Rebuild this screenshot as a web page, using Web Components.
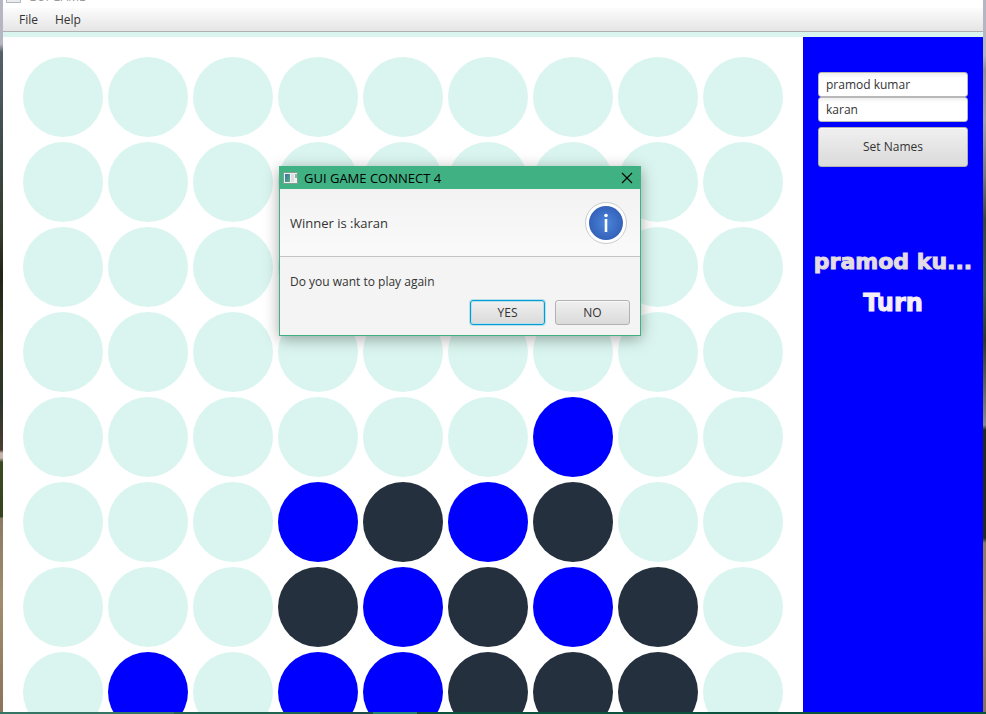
<!DOCTYPE html>
<html lang="en">
<head>
<meta charset="utf-8">
<title>GUI GAME</title>
<style>
html, body { margin: 0; height: 100%; }
body { overflow: hidden; font: 12px/16px "Open Sans", "Noto Sans", sans-serif; color: #333; }
</style>
</head>
<body>
<game-desktop>
  <game-window heading="GUI GAME">
    <menu-bar slot="menu"></menu-bar>
    <game-board rows="........./........./........./........./......b../...bdbd../...dbdbd./.b.bbddd."></game-board>
    <player-panel slot="side" one="pramod kumar" two="karan" current="pramod ku..."></player-panel>
  </game-window>
  <alert-dialog slot="dialog" heading="GUI GAME CONNECT 4">
    <span slot="header">Winner is :karan</span>
    <span>Do you want to play again</span>
    <fx-button slot="actions" class="default">YES</fx-button>
    <fx-button slot="actions">NO</fx-button>
  </alert-dialog>
</game-desktop>
<script>
class Base extends HTMLElement {
  connectedCallback() {
    if (this.shadowRoot) return;
    this.attachShadow({ mode: "open" }).innerHTML =
      "<style>*{box-sizing:border-box}:host{box-sizing:border-box}</style>" + this.render();
  }
}

customElements.define("game-desktop", class extends Base {
  render() { return `
    <style>
      :host { display: grid; grid-template: minmax(0, 1fr) 2px / 3px minmax(0, 1fr) 3px; height: 100vh; position: relative; overflow: hidden; }
      .left { background: linear-gradient(#b5b6c2 0 44px, #55606a 52px, #414f50 130px, #343a2c 235px, #202317 275px, #33371f 340px, #2b3429 400px, #4b3c30 450px, #c5b3ac 453px 458px, #3a4a20 462px, #35431d 517px, #8b7a62 518px, #a18d6e 600px, #8a745a); }
      .right { background: linear-gradient(#b5b6c2 0 55px, #8f8f99 70px, #a0a0aa 120px, #777 175px, #3b4238 220px, #3a5a4b 290px, #2d3526 340px, #888 425px, #22281a 430px 538px, #8b7a62 543px, #96866c 620px, #857258); }
      .bar { grid-column: 1 / -1; background: linear-gradient(90deg, #347663 0 174px, #1f654f 174px 320px, #1c4e47 320px 373px, #218570 373px 417px, #124c3b 417px 421px, #0b533c 421px); }
    </style>
    <div class="left"></div><slot></slot><div class="right"></div><div class="bar"></div>
    <slot name="dialog"></slot>`; }
});

customElements.define("game-window", class extends Base {
  render() { return `
    <style>
      :host { display: flex; flex-direction: column; min-height: 0; overflow: hidden; background: #daf5ef; }
      header { height: 8px; flex: none; display: flex; align-items: flex-end; gap: 6px; padding: 0 3px 3px; background: #fff; overflow: hidden; color: #999; }
      header svg { flex: none; width: 16px; height: 16px; margin-bottom: 1px; }
      header span { font-size: 12px; line-height: 16px; }
      main { flex: 1; min-height: 0; display: grid; grid-template-columns: minmax(0, 1fr) 180px; margin-top: 5px; }
    </style>
    <header><svg viewBox="0 0 16 16"><path d="M.5 2.5h14v12H.5z" fill="#e9ebee" stroke="#b4b7ba"/></svg><span>${this.getAttribute("heading")}</span></header>
    <slot name="menu"></slot>
    <main><slot></slot><slot name="side"></slot></main>`; }
});

customElements.define("menu-bar", class extends Base {
  render() { return `
    <style>
      :host { display: flex; flex: none; height: 24px; padding: 0 8px; background: linear-gradient(#fcfcfc, #e5e5e5); border-bottom: 1px solid #b0b0b0; }
      button { border: 0; background: none; font: inherit; color: inherit; padding: 0 8px 0; }
      nav { display: flex; gap: 1px; }
    </style>
    <nav><button type="button">File</button><button type="button">Help</button></nav>`; }
});

customElements.define("game-board", class extends Base {
  render() {
    const kinds = { ".": "empty", b: "blue", d: "dark" };
    const cells = [...this.getAttribute("rows").replaceAll("/", "")].map(c => `<i class="${kinds[c]}"></i>`).join("");
    return `
    <style>
      :host { display: grid; grid-template-columns: repeat(9, 80px); grid-auto-rows: 80px; gap: 5px; padding: 20px; background: #fff; overflow: hidden; min-height: 0; }
      i { border-radius: 50%; background: #daf5ef; }
      .blue { background: #00f; }
      .dark { background: #24303e; }
    </style>${cells}`; }
});

customElements.define("fx-button", class extends Base {
  render() { return `
    <style>
      :host { display: flex; width: 75px; height: 25px; }
      button { flex: 1; font: inherit; color: #333; padding: 0; border: 1px solid #b2b2b2; border-radius: 3px; background: linear-gradient(#f0f0f0, #dadada); box-shadow: inset 0 1px #f8f8f8; }
      :host(.default) button { border-color: #039ed3; box-shadow: 0 0 0 1px #b8dfec, inset 0 0 0 1px #b8dfec; }
    </style>
    <button type="button"><slot></slot></button>`; }
});

customElements.define("player-panel", class extends Base {
  render() { return `
    <style>
      :host { display: flex; flex-direction: column; background: #00f; padding: 35px 15px; }
      input { width: 100%; height: 25px; font: inherit; color: #333; border: 1px solid #b8b8b8; border-radius: 3px; padding: 0 7px; background: linear-gradient(#f0f0f0, #fff 5px); outline: 0; }
      fx-button { width: auto; height: 40px; margin: 5px 0 77px; }
      output { margin: 0 -15px; text-align: center; white-space: nowrap; font: 900 22px/36px "DejaVu Sans", sans-serif; color: #e3dce2; -webkit-text-stroke: 1px currentColor; }
      output + output { color: #f6eff6; margin-top: 5px; font-size: 24px; }
    </style>
    <input aria-label="Player one name" value="${this.getAttribute("one")}">
    <input aria-label="Player two name" value="${this.getAttribute("two")}">
    <fx-button>Set Names</fx-button>
    <output>${this.getAttribute("current")}</output><output>Turn</output>`; }
});

customElements.define("alert-dialog", class extends Base {
  render() { return `
    <style>
      :host { position: absolute; left: 279px; top: 166px; width: 362px; display: flex; flex-direction: column; background: #f4f4f4; border: 1px solid #40b183; box-shadow: 0 3px 14px rgba(0,0,0,.35); }
      .title { display: flex; align-items: center; gap: 6px; height: 22px; padding: 0 7px 0 3px; background: #40b183; color: #000; font-size: 13px; }
      .title span { flex: 1; }
      .title button { border: 0; background: none; padding: 0; display: flex; }
      .head { display: flex; align-items: center; justify-content: space-between; height: 68px; padding: 0 12px 0 10px; background: linear-gradient(#f2f2f2, #fafafa); border-bottom: 1px solid #c4c4c4; font-size: 13px; }
      .content { padding: 17px 10px 0; }
      .actions { display: flex; justify-content: flex-end; gap: 10px; padding: 10px; }
    </style>
    <div class="title">
      <svg width="15" height="13" viewBox="0 0 15 13"><defs><linearGradient id="w" x2="1" y2="1"><stop stop-color="#386fa8"/><stop offset="1" stop-color="#5caf7b"/></linearGradient></defs><path d="M.5.5h14v11H.5z" fill="#edf1ef" stroke="#839c91"/><path d="M2 2h5v8H2z" fill="url(#w)"/><path d="M8 2h3v8H8z" fill="#d9dfe0"/><path d="M12 2h2v4h-2z" fill="#85bba2"/></svg>
      <span>${this.getAttribute("heading")}</span>
      <button type="button" aria-label="Close"><svg width="12" height="12" viewBox="0 0 12 12"><path d="M1 1l10 10M11 1L1 11" stroke="#000" stroke-width="1.1"/></svg></button>
    </div>
    <div class="head"><slot name="header"></slot>
      <svg width="44" height="44" viewBox="0 0 44 44"><defs><radialGradient id="g"><stop stop-color="#4a86da"/><stop offset="1" stop-color="#3561b9"/></radialGradient></defs><circle cx="22" cy="22" r="20.5" fill="#fff" stroke="#ccc"/><circle cx="22" cy="22" r="17" fill="url(#g)"/><circle cx="22" cy="14.500" r="1.800" fill="#fff"/><path d="M20.700 18h2.600v13h-2.600z" fill="#fff"/></svg>
    </div>
    <div class="content"><slot></slot></div>
    <div class="actions"><slot name="actions"></slot></div>`; }
});
</script>
</body>
</html>
